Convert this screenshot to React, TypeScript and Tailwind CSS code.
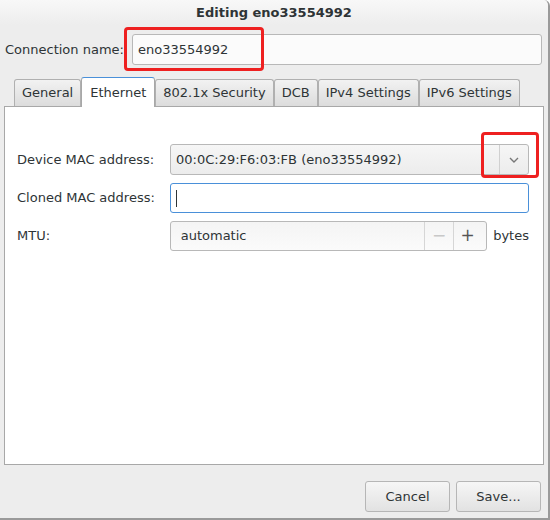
import React from 'react';

const tabs = ['General', 'Ethernet', '802.1x Security', 'DCB', 'IPv4 Settings', 'IPv6 Settings'];

function Field({ children, className = '' }: { children?: React.ReactNode; className?: string }) {
  return (
    <div
      className={`flex h-[30px] items-center rounded-[3px] border border-[#b8b8b8] bg-gradient-to-b from-[#f4f4f4] to-[#fbfbfb] px-[5px] text-[#2e3436] ${className}`}
    >
      {children}
    </div>
  );
}

export default function App() {
  return (
    <div
      className="relative flex h-[520px] w-[550px] flex-col overflow-hidden rounded-tr-[6px] border-r-2 border-b-2 border-[#9a9a9a] bg-[#ededed] text-[13px] text-[#2e3436]"
      style={{ fontFamily: '"DejaVu Sans", Verdana, sans-serif' }}
    >
      {/* title bar */}
      <div className="flex h-[25px] items-center justify-center bg-gradient-to-b from-[#f8f8f8] to-[#ededed] font-bold text-[#2e3436]">
        Editing eno33554992
      </div>

      {/* connection name */}
      <div className="mt-[9px] flex items-center pl-[5px]">
        <span className="w-[127px]">Connection name:</span>
        <div className="flex h-[31px] w-[410px] items-center rounded-[3px] border border-[#b8b8b8] bg-[#fbfbfb] px-[5px]">
          eno33554992
        </div>
      </div>

      {/* tabs */}
      <div className="mt-[12px] flex items-end pl-[14px]">
        {tabs.map((t) => {
          const active = t === 'Ethernet';
          return (
            <div
              key={t}
              className={
                active
                  ? 'relative z-10 -mb-px flex h-[30px] items-center rounded-t-[3px] border border-b-0 border-[#a8a8a8] border-t-[#4a90d9] bg-white px-[8px]'
                  : 'flex h-[27px] items-center rounded-t-[3px] border border-b-0 border-[#b0b0b0] bg-gradient-to-b from-[#f2f2f2] to-[#dcdcdc] px-[7px]'
              }
            >
              {t}
            </div>
          );
        })}
      </div>

      {/* notebook page */}
      <div className="mx-[4px] flex h-[359px] flex-col gap-[8px] border border-[#a8a8a8] bg-white pt-[37px] pr-[14px] pl-[12px]">
        <div className="flex items-center">
          <span className="w-[153px]">Device MAC address:</span>
          <div className="flex h-[31px] flex-1 items-stretch rounded-[3px] border border-[#b8b8b8] bg-gradient-to-b from-[#f6f6f6] to-[#ececec]">
            <span className="flex flex-1 items-center px-[5px]">00:0C:29:F6:03:FB (eno33554992)</span>
            <span className="flex w-[29px] items-center justify-center border-l border-[#d0d0d0]">
              <svg width="10" height="6" viewBox="0 0 10 6">
                <path d="M1 1 L5 5 L9 1" fill="none" stroke="#777" strokeWidth="1.4" />
              </svg>
            </span>
          </div>
        </div>
        <div className="flex items-center">
          <span className="w-[153px]">Cloned MAC address:</span>
          <div className="flex h-[30px] flex-1 items-center rounded-[3px] border border-[#4a90d9] bg-white px-[5px]">
            <span className="h-[17px] w-px bg-[#2e3436]" />
          </div>
        </div>
        <div className="flex items-center">
          <span className="w-[153px]">MTU:</span>
          <Field className="w-[318px] px-0">
            <span className="flex-1 px-[5px]">automatic</span>
            <span className="flex h-full w-[29px] items-center justify-center border-l border-[#d6d6d6] text-[17px] text-[#c8c8c8]">−</span>
            <span className="flex h-full w-[28px] items-center justify-center border-l border-[#d6d6d6] text-[17px] text-[#555]">+</span>
          </Field>
          <span className="ml-[6px]">bytes</span>
        </div>
      </div>

      {/* buttons */}
      <div className="mt-[16px] flex justify-end gap-[6px] pr-[7px]">
        <button className="h-[31px] w-[85px] rounded-[3px] border border-[#b6b6b6] bg-gradient-to-b from-[#f6f6f6] to-[#e2e2e2]">
          Cancel
        </button>
        <button className="h-[31px] w-[85px] rounded-[3px] border border-[#b6b6b6] bg-gradient-to-b from-[#f6f6f6] to-[#e2e2e2]">
          Save...
        </button>
      </div>

      {/* red annotation boxes */}
      <div className="absolute top-[27px] left-[124px] h-[44px] w-[140px] rounded-[4px] border-[3px] border-[#ee2020]" />
      <div className="absolute top-[132px] left-[481px] h-[46px] w-[58px] rounded-[4px] border-[3px] border-[#ee2020]" />
    </div>
  );
}
